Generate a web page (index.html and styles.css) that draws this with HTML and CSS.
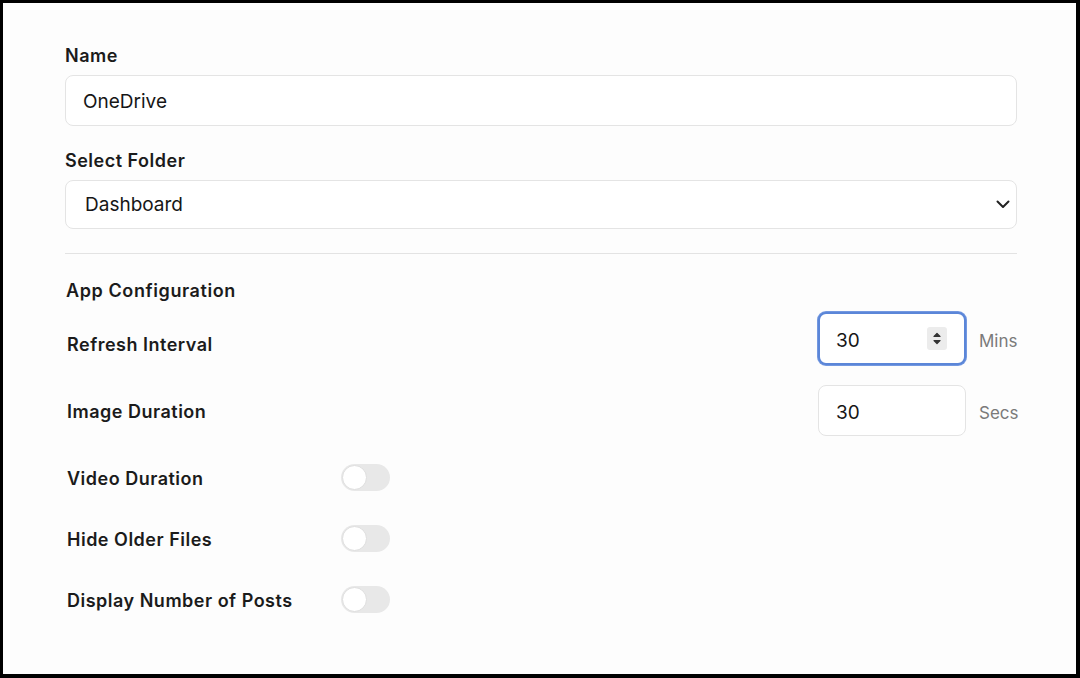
FILE: index.html
```html
<!DOCTYPE html>
<html lang="en">
<head>
<meta charset="utf-8">
<title>OneDrive App Settings</title>
<link rel="stylesheet" href="styles.css">
</head>
<body>
<div class="frame">
  <form class="content">
    <div class="field">
      <label class="label">Name</label>
      <div class="textbox">OneDrive</div>
    </div>
    <div class="field field-second">
      <label class="label">Select Folder</label>
      <div class="textbox select">
        <span class="select-value">Dashboard</span>
        <svg class="chevron" width="14" height="9" viewBox="0 0 14 9"><path d="M1.5 1.5 L7 7 L12.5 1.5" fill="none" stroke="#222" stroke-width="2" stroke-linecap="round" stroke-linejoin="round"/></svg>
      </div>
    </div>
    <hr class="divider">
    <section class="config">
      <h2 class="section-title">App Configuration</h2>
      <div class="num-row num-row-first">
        <span class="row-label row-label-low">Refresh Interval</span>
        <div class="num-group">
          <div class="numbox focused">
            <span class="num-value">30</span>
            <span class="spinner">
              <svg width="12" height="17" viewBox="0 0 12 17"><path d="M3 6.5 L6 3.5 L9 6.5 Z" fill="#333" stroke="#333" stroke-width="1.2" stroke-linejoin="round"/><path d="M3 10.5 L6 13.5 L9 10.5 Z" fill="#333" stroke="#333" stroke-width="1.2" stroke-linejoin="round"/></svg>
            </span>
          </div>
          <span class="unit">Mins</span>
        </div>
      </div>
      <div class="num-row">
        <span class="row-label">Image Duration</span>
        <div class="num-group">
          <div class="numbox"><span class="num-value">30</span></div>
          <span class="unit">Secs</span>
        </div>
      </div>
      <div class="toggle-row">
        <span class="row-label">Video Duration</span>
        <span class="toggle"><span class="knob"></span></span>
      </div>
      <div class="toggle-row">
        <span class="row-label">Hide Older Files</span>
        <span class="toggle"><span class="knob"></span></span>
      </div>
      <div class="toggle-row">
        <span class="row-label">Display Number of Posts</span>
        <span class="toggle"><span class="knob"></span></span>
      </div>
    </section>
  </form>
</div>
</body>
</html>
```
FILE: styles.css
```css
* { box-sizing: border-box; }
html, body { margin: 0; padding: 0; }
body {
  font-family: Inter, "Noto Sans", "Liberation Sans", sans-serif;
  color: #1b1b1b;
  background: #000;
}
.frame {
  width: 1080px;
  height: 678px;
  border-style: solid;
  border-color: #000;
  border-width: 3px 4px 4px 3px;
  background: #fdfdfd;
  overflow: hidden;
}
.content {
  padding: 42px 59px 0 62px;
  display: flex;
  flex-direction: column;
}
.field { display: flex; flex-direction: column; }
.field-second { margin-top: 24px; }
.label {
  font-size: 18px;
  font-weight: 600;
  line-height: 22px;
  margin-bottom: 8px;
  letter-spacing: 0.5px;
}
.textbox {
  height: 51px;
  border: 1px solid #e4e4e4;
  border-radius: 8px;
  background: #fff;
  font-size: 19px;
  display: flex;
  align-items: center;
  padding-left: 17px;
  padding-top: 1px;
  color: #161616;
}
.select {
  height: 49px;
  padding-left: 19px;
  padding-right: 6px;
  padding-top: 0;
  justify-content: space-between;
}
.chevron { display: block; }
.divider {
  border: 0;
  border-top: 1px solid #e3e3e3;
  margin: 24px 0 0 0;
  height: 0;
}
.config {
  display: flex;
  flex-direction: column;
  padding-left: 1px;
}
.section-title {
  font-size: 18px;
  font-weight: 600;
  line-height: 22px;
  margin: 26px 0 0 0;
  letter-spacing: 0.6px;
}
.row-label {
  font-size: 18px;
  font-weight: 600;
  line-height: 22px;
  padding-left: 1px;
  padding-top: 3px;
  letter-spacing: 0.5px;
}
.row-label-low { padding-top: 13px; }
.num-row {
  display: flex;
  align-items: center;
  justify-content: space-between;
  margin-top: 20px;
}
.num-row-first { margin-top: 10px; }
.num-group {
  display: flex;
  align-items: center;
  gap: 13px;
}
.numbox {
  width: 148px;
  height: 51px;
  border: 1px solid #e4e4e4;
  border-radius: 8px;
  background: #fff;
  font-size: 19px;
  display: flex;
  align-items: center;
  justify-content: space-between;
  padding: 0 17px 0 17px;
  color: #161616;
}
.num-value { padding-top: 4px; }
.focused {
  height: 53px;
  border: 2px solid #5b86d8;
  box-shadow: 0 0 0 1px #7398e0;
  border-radius: 8px;
  padding: 0 17px 0 16px;
}
.spinner {
  width: 20px;
  height: 23px;
  background: #ececec;
  border-radius: 3px;
  display: flex;
  align-items: center;
  justify-content: center;
}
.unit {
  font-size: 17px;
  color: #7a7a7a;
  width: 38px;
  padding-top: 4px;
}
.toggle-row {
  display: grid;
  grid-template-columns: 275px 49px;
  align-items: center;
  height: 40px;
  margin-top: 21px;
}
.toggle {
  display: flex;
  align-items: center;
  width: 49px;
  height: 27px;
  border-radius: 14px;
  background: #e8e8e8;
  padding-left: 1px;
}
.knob {
  width: 25px;
  height: 25px;
  border-radius: 50%;
  background: #fff;
  border: 1px solid #dedede;
}
```
